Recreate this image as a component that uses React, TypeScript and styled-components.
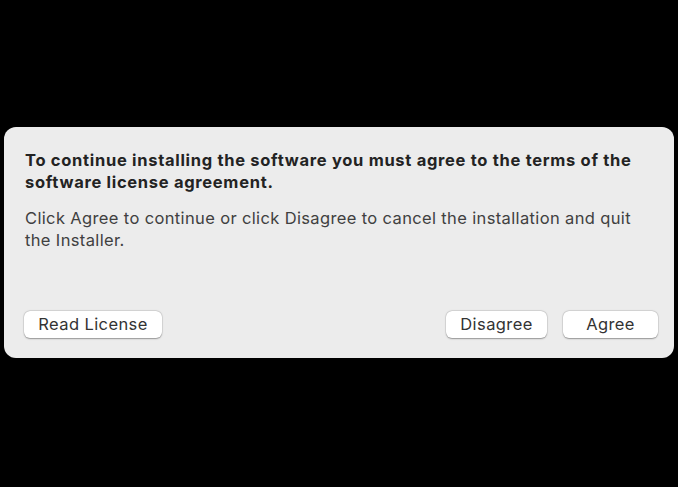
import React from "react";
import styled, { createGlobalStyle } from "styled-components";

const Global = createGlobalStyle`
  html, body { margin: 0; padding: 0; background: #000; }
  body { width: 678px; height: 487px; overflow: hidden; }
`;

const Page = styled.div`
  width: 678px;
  height: 487px;
  box-sizing: border-box;
  padding: 127px 4px 0 4px;
  background: #000;
  font-family: Inter, "Liberation Sans", sans-serif;
`;

const Dialog = styled.div`
  height: 231px;
  box-sizing: border-box;
  background: #ececec;
  border-radius: 12px;
  padding: 22px 16px 20px 21px;
  display: flex;
  flex-direction: column;
`;

const Heading = styled.div`
  font-size: 16.5px;
  font-weight: 700;
  line-height: 22px;
  letter-spacing: 0.7px;
  color: #232323;
`;

const Body = styled.div`
  margin-top: 14px;
  font-size: 16.5px;
  line-height: 22px;
  letter-spacing: 0.36px;
  color: #404040;
`;

const Actions = styled.div`
  margin-top: auto;
  margin-left: -1px;
  display: flex;
  align-items: center;
  gap: 16px;
`;

const Spacer = styled.div`
  flex: 1;
`;

const Button = styled.button<{ $w: number }>`
  width: ${(p) => p.$w}px;
  height: 27px;
  border: none;
  border-radius: 6px;
  background: #fff;
  box-shadow: 0 0.5px 1.5px rgba(0, 0, 0, 0.35), 0 0 0 0.5px rgba(0, 0, 0, 0.08);
  font-family: inherit;
  font-size: 16.5px;
  letter-spacing: 0.4px;
  color: #333;
  padding: 0 0 1px;
  display: flex;
  align-items: center;
  justify-content: center;
`;

export default function App() {
  return (
    <>
      <Global />
      <Page>
        <Dialog>
          <Heading>
            To continue installing the software you must agree to the terms of the
            software license agreement.
          </Heading>
          <Body>
            Click Agree to continue or click Disagree to cancel the installation and quit
            the Installer.
          </Body>
          <Actions>
            <Button $w={138}>Read License</Button>
            <Spacer />
            <Button $w={101}>Disagree</Button>
            <Button $w={95}>Agree</Button>
          </Actions>
        </Dialog>
      </Page>
    </>
  );
}
